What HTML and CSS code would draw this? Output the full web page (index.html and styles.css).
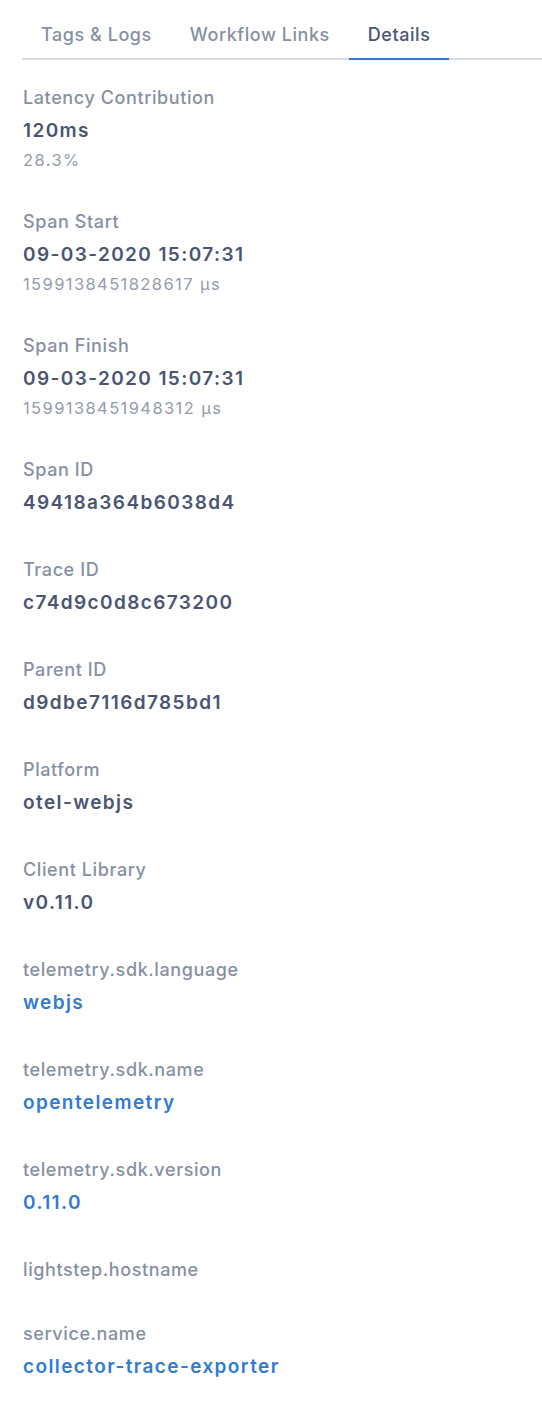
FILE: index.html
```html
<!DOCTYPE html>
<html lang="en">
<head>
<meta charset="utf-8">
<title>Details</title>
<link rel="stylesheet" href="styles.css">
</head>
<body>
<div class="panel">
  <nav class="tabs">
    <div class="tab">Tags &amp; Logs</div>
    <div class="tab">Workflow Links</div>
    <div class="tab active">Details</div>
  </nav>
  <div class="details">
    <div class="item">
      <div class="label">Latency Contribution</div>
      <div class="value">120ms</div>
      <div class="sub">28.3%</div>
    </div>
    <div class="item">
      <div class="label">Span Start</div>
      <div class="value">09-03-2020 15:07:31</div>
      <div class="sub">1599138451828617 µs</div>
    </div>
    <div class="item">
      <div class="label">Span Finish</div>
      <div class="value">09-03-2020 15:07:31</div>
      <div class="sub">1599138451948312 µs</div>
    </div>
    <div class="item">
      <div class="label">Span ID</div>
      <div class="value">49418a364b6038d4</div>
    </div>
    <div class="item">
      <div class="label">Trace ID</div>
      <div class="value">c74d9c0d8c673200</div>
    </div>
    <div class="item">
      <div class="label">Parent ID</div>
      <div class="value">d9dbe7116d785bd1</div>
    </div>
    <div class="item">
      <div class="label">Platform</div>
      <div class="value">otel-webjs</div>
    </div>
    <div class="item">
      <div class="label">Client Library</div>
      <div class="value">v0.11.0</div>
    </div>
    <div class="item">
      <div class="label">telemetry.sdk.language</div>
      <div class="value link">webjs</div>
    </div>
    <div class="item">
      <div class="label">telemetry.sdk.name</div>
      <div class="value link">opentelemetry</div>
    </div>
    <div class="item">
      <div class="label">telemetry.sdk.version</div>
      <div class="value link">0.11.0</div>
    </div>
    <div class="item empty">
      <div class="label">lightstep.hostname</div>
    </div>
    <div class="item">
      <div class="label">service.name</div>
      <div class="value link">collector-trace-exporter</div>
    </div>
  </div>
</div>
</body>
</html>
```

FILE: styles.css
```css
html, body {
  margin: 0;
  padding: 0;
  background: #ffffff;
}

body {
  font-family: Inter, "Noto Sans", "Liberation Sans", sans-serif;
  -webkit-font-smoothing: antialiased;
}

.panel {
  width: 542px;
}

.tabs {
  display: flex;
  margin-left: 22px;
  border-bottom: 2px solid #d9dce3;
}

.tab {
  padding: 22px 19px 10px;
  margin-bottom: -2px;
  border-bottom: 2px solid transparent;
  font-size: 18px;
  line-height: 26px;
  font-weight: 500;
  color: #8790a3;
  letter-spacing: 0.55px;
}

.tab.active {
  color: #4a5573;
  border-bottom-color: #3179d4;
}

.details {
  display: flex;
  flex-direction: column;
  gap: 44px;
  padding: 27px 0 0 23px;
}

.item.empty {
  margin-bottom: -2px;
}

.label {
  font-size: 18px;
  line-height: 22px;
  font-weight: 500;
  color: #8790a3;
  letter-spacing: 0.6px;
}

.value {
  margin-top: 10px;
  font-size: 19px;
  line-height: 24px;
  font-weight: 600;
  color: #4a5573;
  letter-spacing: 1.4px;
}

.value.link {
  color: #2f7bd5;
}

.sub {
  margin: 8px 0 -2px;
  font-size: 16.5px;
  line-height: 18px;
  font-weight: 400;
  color: #949cae;
  letter-spacing: 1.4px;
}
```
